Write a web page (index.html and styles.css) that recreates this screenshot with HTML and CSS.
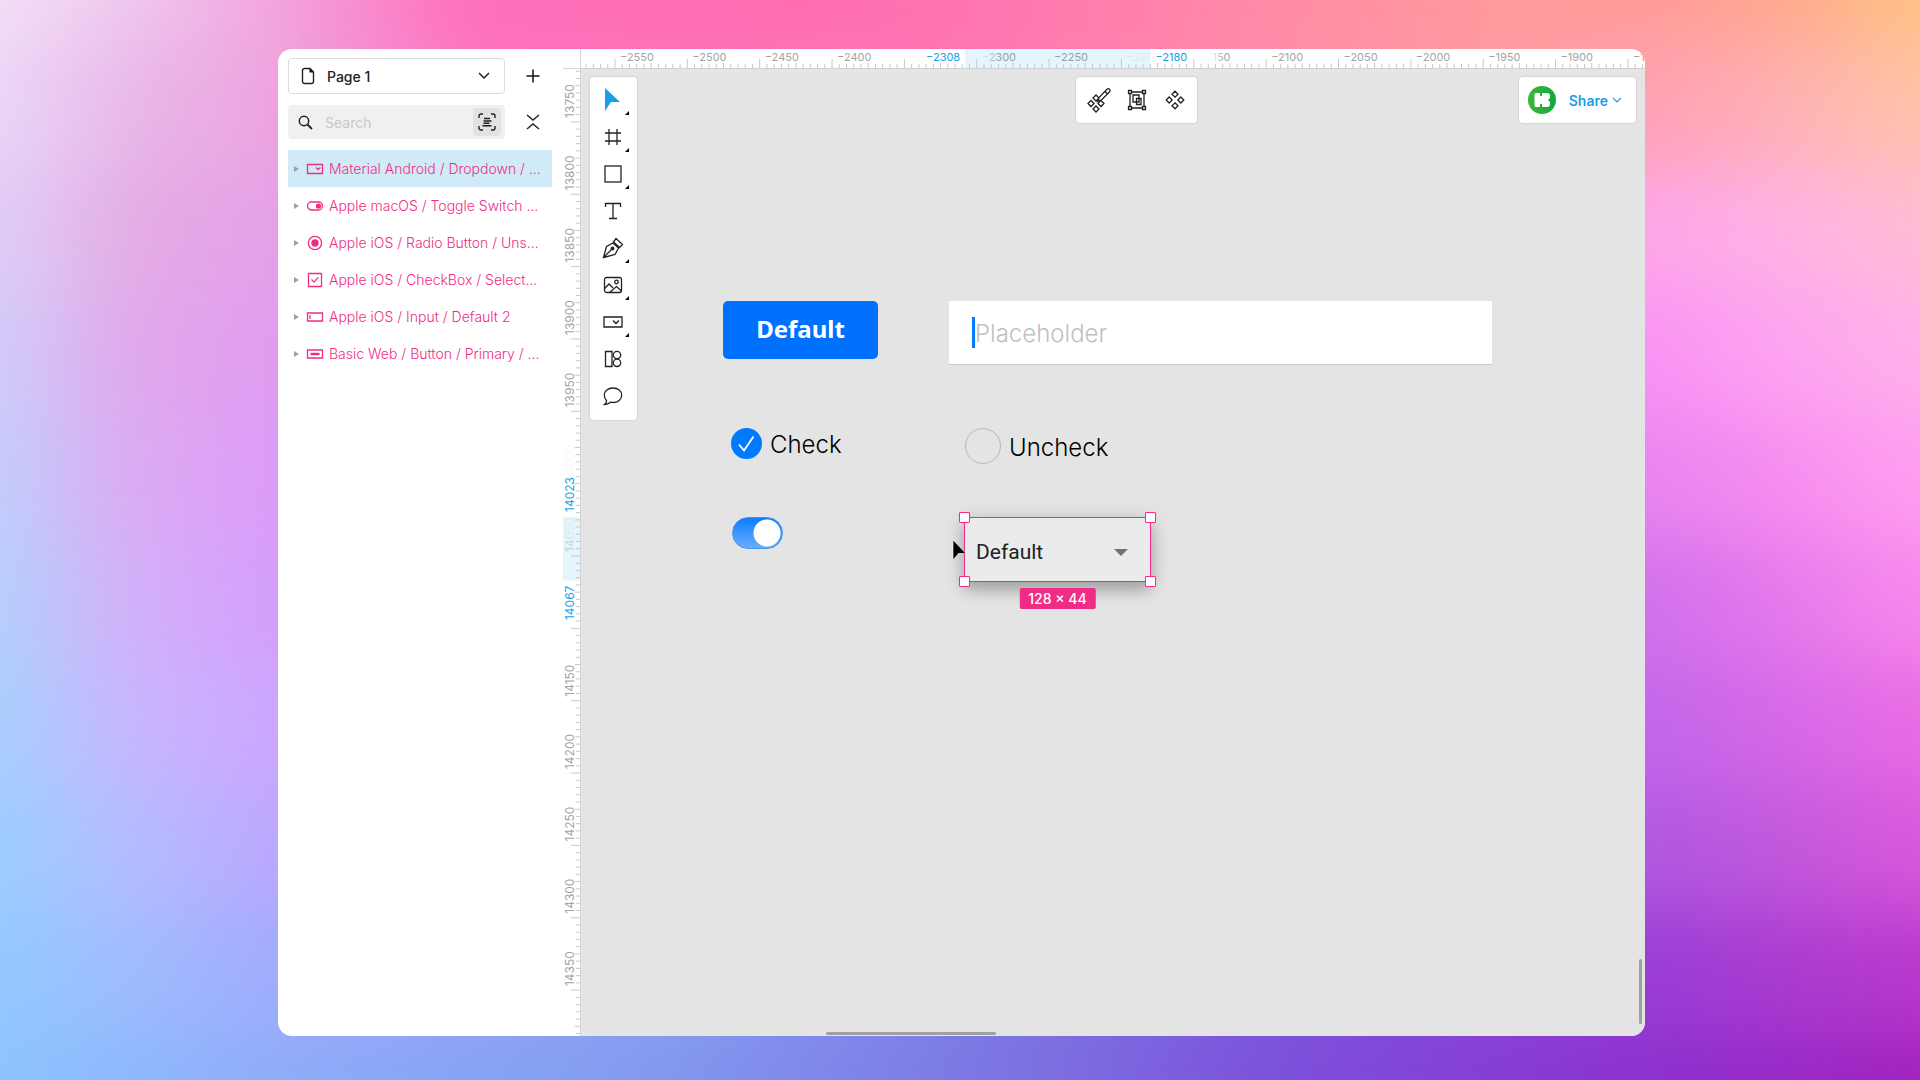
FILE: index.html
```html
<!DOCTYPE html>
<html lang="en">
<head>
<meta charset="utf-8">
<title>Page 1</title>
<link rel="stylesheet" href="styles.css">
</head>
<body>
<div class="stage">
<div class="backdrop" aria-hidden="true">
  <div class="band band-1"></div><div class="band band-2"></div><div class="band band-3"></div><div class="band band-4"></div><div class="band band-5"></div>
  <div class="band band-6"></div><div class="band band-7"></div><div class="band band-8"></div><div class="band band-9"></div><div class="band band-10"></div>
</div>
<main class="app">
  <aside class="sidebar">
    <div class="side-row">
      <button class="page-picker" type="button">
        <svg width="14" height="18" viewBox="0 0 14 18" fill="none" stroke="#222" stroke-width="1.4"><path d="M1.5 3.5a2 2 0 0 1 2-2H9l3.5 3.5v9.5a2 2 0 0 1-2 2h-7a2 2 0 0 1-2-2z"/><path d="M8.5 1v4.500H13z" fill="#111" stroke="none"/></svg>
        <span class="page-name">Page 1</span>
        <svg width="12" height="8" viewBox="0 0 12 8" fill="none" stroke="#222" stroke-width="1.5"><path d="M1 1l5 5 5-5"/></svg>
      </button>
      <button class="side-button" type="button" aria-label="Add page"><svg width="14" height="14" viewBox="0 0 14 14" stroke="#111" stroke-width="1.5"><path d="M7 .5v13M.5 7h13"/></svg></button>
    </div>
    <div class="side-row">
      <div class="search">
        <svg width="15" height="15" viewBox="0 0 15 15" fill="none" stroke="#222" stroke-width="1.5"><circle cx="6" cy="6" r="4.700"/><path d="M9.500 9.500L14 14" stroke-width="1.800"/></svg>
        <input class="search-input" type="text" placeholder="Search" aria-label="Search layers">
        <button class="scan" type="button" aria-label="Search in text"><svg width="18" height="18" viewBox="0 0 18 18" fill="none" stroke="#222" stroke-width="1.400"><path d="M1 5V3a2 2 0 0 1 2-2h2M13 1h2a2 2 0 0 1 2 2v2M17 13v2a2 2 0 0 1-2 2h-2M5 17H3a2 2 0 0 1-2-2v-2M6 5.500h6M5.500 8h8M5.500 10.300h6M4.500 12.700h9"/></svg></button>
      </div>
      <button class="side-button" type="button" aria-label="Collapse all"><svg width="14" height="16" viewBox="0 0 14 16" fill="none" stroke="#222" stroke-width="1.400"><path d="M1 1l6 5 6-5M1 15l6-5 6 5"/></svg></button>
    </div>
    <ul class="layers">
      <li class="layer layer-selected"><span class="twist"></span><svg class="layer-icon" viewBox="0 0 18 16"><path d="M1.500 3.500h15v9h-15z"/><path d="M10 6.500l2.200 2.200 2.200-2.200"/></svg><span class="layer-name">Material Android / Dropdown / ...</span></li>
      <li class="layer"><span class="twist"></span><svg class="layer-icon" viewBox="0 0 18 16"><rect x="1.500" y="4" width="15" height="8" rx="4"/><circle cx="12.500" cy="8" r="2.600" fill="#f02d86" stroke="none"/></svg><span class="layer-name">Apple macOS / Toggle Switch ...</span></li>
      <li class="layer"><span class="twist"></span><svg class="layer-icon" viewBox="0 0 18 16"><circle cx="9" cy="8" r="6.600"/><circle cx="9" cy="8" r="3.700" fill="#f02d86" stroke="none"/></svg><span class="layer-name">Apple iOS / Radio Button / Uns...</span></li>
      <li class="layer"><span class="twist"></span><svg class="layer-icon" viewBox="0 0 18 16"><path d="M2.500 1.500h13v13h-13z"/><path d="M5.500 7.500l2.600 2.600 4-4.800"/></svg><span class="layer-name">Apple iOS / CheckBox / Select...</span></li>
      <li class="layer"><span class="twist"></span><svg class="layer-icon" viewBox="0 0 18 16"><path d="M1.500 4h15v8h-15zM4 6v4"/></svg><span class="layer-name">Apple iOS / Input / Default 2</span></li>
      <li class="layer"><span class="twist"></span><svg class="layer-icon" viewBox="0 0 18 16"><path d="M1.500 4h15v8h-15z"/><path d="M4.500 8h9" stroke-width="2.400"/></svg><span class="layer-name">Basic Web / Button / Primary / ...</span></li>
    </ul>
  </aside>

  <section class="workspace">
    <div class="corner"></div>
    <svg class="ruler-x" id="ruler-x">
      <defs><linearGradient id="fade-x" gradientUnits="userSpaceOnUse" x1="310" y1="0" x2="650" y2="0">
        <stop offset="0" stop-color="#fff" stop-opacity="0"/><stop offset=".05" stop-color="#fff" stop-opacity=".95"/><stop offset=".27" stop-color="#fff" stop-opacity=".95"/><stop offset=".32" stop-color="#fff" stop-opacity="0"/>
        <stop offset=".65" stop-color="#fff" stop-opacity="0"/><stop offset=".7" stop-color="#fff" stop-opacity=".88"/><stop offset=".94" stop-color="#fff" stop-opacity=".95"/><stop offset=".98" stop-color="#fff" stop-opacity="0"/></linearGradient></defs>
    </svg>
    <svg class="ruler-y" id="ruler-y">
      <defs><linearGradient id="fade-y" gradientUnits="userSpaceOnUse" x1="0" y1="350" x2="0" y2="590">
        <stop offset="0" stop-color="#fff" stop-opacity="0"/><stop offset=".1" stop-color="#fff" stop-opacity=".92"/><stop offset=".38" stop-color="#fff" stop-opacity=".95"/><stop offset=".48" stop-color="#fff" stop-opacity=".85"/><stop offset=".56" stop-color="#fff" stop-opacity=".4"/><stop offset=".65" stop-color="#fff"/><stop offset=".9" stop-color="#fff"/><stop offset="1" stop-color="#fff" stop-opacity="0"/></linearGradient></defs>
    </svg>

    <div class="canvas">
      <nav class="panel tools" aria-label="Tools">
        <button class="tool tool-more" type="button" aria-label="Select"><svg width="26" height="26" viewBox="0 0 26 26"><path d="M5 1v23l6-9h9z" fill="#189fe8"/></svg></button>
        <button class="tool tool-more" type="button" aria-label="Frame"><svg width="20" height="20" viewBox="0 0 20 20"><path d="M6 2v16M14 2v16M2 6h16M2 14h16"/></svg></button>
        <button class="tool tool-more" type="button" aria-label="Rectangle"><svg width="20" height="20" viewBox="0 0 20 20"><rect x="2" y="2" width="16" height="16"/></svg></button>
        <button class="tool" type="button" aria-label="Text"><svg width="20" height="20" viewBox="0 0 20 20"><path d="M2.500 6V2.500h15V6M10 2.500v15M6 17.500h8"/></svg></button>
        <button class="tool tool-more" type="button" aria-label="Pen"><svg width="22" height="22" viewBox="0 0 22 22"><path d="M1.500 20.500L4.500 9.500 11 6l5.500 5L13 17.500zM1.500 20.500l8-8M11.500 5l2.500-3.500 6.500 6-3 3z"/><circle cx="10.500" cy="11.500" r="1.300" fill="#222"/></svg></button>
        <button class="tool tool-more" type="button" aria-label="Image"><svg width="20" height="20" viewBox="0 0 20 20"><rect x="1.500" y="2.500" width="17" height="15" rx="2"/><circle cx="13.500" cy="7" r="1.800"/><path d="M1.500 13.500L6 9l4 4M6.500 17.500l7-6 5 4.500"/></svg></button>
        <button class="tool tool-more" type="button" aria-label="Component"><svg width="20" height="20" viewBox="0 0 20 20"><path d="M1 5h18v10H1zM10 8.500l3 3 3-3"/></svg></button>
        <button class="tool" type="button" aria-label="Icons"><svg width="20" height="20" viewBox="0 0 20 20"><path d="M2.500 2.500H9v15H2.500z"/><circle cx="14" cy="6" r="3.700"/><circle cx="14" cy="13.800" r="3.700"/></svg></button>
        <button class="tool" type="button" aria-label="Comment"><svg width="20" height="20" viewBox="0 0 20 20"><path d="M1.500 18.500c1.800-1.500 2.300-2.500 2-4C2 13 1.300 11.500 1.300 9.200 1.300 5 5 2 10 2s8.700 3 8.700 7.200-3.700 7.300-8.700 7.300c-1 0-1.700-.1-2.500-.3-1.500 1.500-3.500 2.300-6 2.300z"/></svg></button>
      </nav>

      <div class="panel actions">
        <button class="tool" type="button" aria-label="Edit component"><svg width="24" height="26" viewBox="0 0 24 26"><path d="M4 13.500l3 3-3 3-3-3zM9 8l3 3-3 3-3-3zM14 13.500l3 3-3 3-3-3zM9 19l3 3-3 3-3-3z"/><path d="M10.500 14.500l2-4.500L20 2.300a1.700 1.700 0 0 1 2.600 2.400L15 12.500zM18 4.500l2.500 2.500" fill="#fff"/></svg></button>
        <button class="tool" type="button" aria-label="Group"><svg width="20" height="22" viewBox="0 0 20 22"><path d="M3 3h14v16H3zM6 6h6v7H6zM9.500 9.500H14v6H9.500z"/><path d="M1.500 1.500h3v3h-3zM15.500 1.500h3v3h-3zM1.500 17.500h3v3h-3zM15.500 17.500h3v3h-3z" fill="#fff"/></svg></button>
        <button class="tool" type="button" aria-label="Create component"><svg width="20" height="20" viewBox="0 0 20 20"><path d="M10 1.200l3 3-3 3-3-3zM4.200 7l3 3-3 3-3-3zM15.800 7l3 3-3 3-3-3zM10 12.800l3 3-3 3-3-3z"/></svg></button>
      </div>

      <div class="panel share-panel">
        <svg width="28" height="28" viewBox="0 0 28 28"><defs><linearGradient id="leaf"><stop offset="0" stop-color="#3fb63a"/><stop offset="1" stop-color="#12a83f"/></linearGradient></defs><circle cx="14" cy="14" r="14" fill="url(#leaf)"/><path d="M8 7h4v3h2V8q0-1 1-1h4q3 0 3 3v2l-2 2 2 2v2q0 3-3 3h-4q-1 0-1-1v-2h-2v3H8q-1.500 0-1.500-1.500v-11Q6.500 7 8 7z" fill="#fff"/></svg>
        <button class="share" type="button">Share<svg width="10" height="7" viewBox="0 0 10 7" fill="none" stroke="#189fe8" stroke-width="1.100"><path d="M1 1l4 4 4-4"/></svg></button>
      </div>

      <button class="item primary-button" type="button">Default</button>
      <div class="item text-field"><input class="text-input" type="text" placeholder="Placeholder" aria-label="Placeholder"></div>

      <label class="item choice choice-check"><input class="round-box round-check" type="checkbox" checked><span class="choice-text">Check</span><svg class="tick" width="31" height="31" viewBox="0 0 31 31" fill="none" stroke="#fff" stroke-width="1.800"><path d="M8 16.500l5 6L22.500 8.500"/></svg></label>
      <label class="item choice choice-radio"><input class="round-box round-radio" type="radio"><span class="choice-text">Uncheck</span></label>
      <input class="item switch" type="checkbox" role="switch" aria-label="Toggle" checked>

      <div class="item dropdown">
        <select class="dropdown-select" aria-label="Dropdown"><option>Default</option></select>
        <svg class="dropdown-arrow" width="14" height="7" viewBox="0 0 14 7"><path d="M0 0h14L7 7z" fill="#737373"/></svg>
        <span class="handle handle-tl"></span><span class="handle handle-tr"></span><span class="handle handle-bl"></span><span class="handle handle-br"></span>
        <span class="size-badge">128 × 44</span>
      </div>
      <svg class="item pointer" width="15" height="24" viewBox="0 0 15 24"><path d="M1 1v20l5.500-6.500H14z" fill="#000" stroke="#fff" stroke-width=".6"/></svg>
      <span class="scroll-x"></span><span class="scroll-y"></span>
    </div>
  </section>
</main>
</div>
<script src="rulers.js"></script>
</body>
</html>
```
FILE: rulers.js
```js
const NS = 'http://www.w3.org/2000/svg';
const SCALE = 1.447;

function add(parent, tag, attrs, text) {
  const node = document.createElementNS(NS, tag);
  for (const key in attrs) node.setAttribute(key, attrs[key]);
  if (text) node.textContent = text;
  parent.appendChild(node);
}
function label(value) { return String(value).replace('-', '−'); }

// labels: first and last labelled value; selection: start and end of the selected layer
function drawRuler(svg, vertical, labels, anchor, anchorPos, selection) {
  const pos = v => anchorPos + (v - anchor) * SCALE;
  const depth = vertical ? 18 : 20;
  const size = vertical ? ' ruler-label-y' : '';
  const text = (p, value, cls, end) => add(svg, 'text', vertical
    ? { transform: `translate(11 ${p}) rotate(-90)`, class: cls + size, 'text-anchor': end ? 'end' : 'start' }
    : { x: p, y: 12, class: cls, 'text-anchor': end ? 'end' : 'start' }, label(value));

  for (let v = labels[0]; v <= labels[1]; v += 50) text(pos(v) + (vertical ? -4 : 5), v, 'ruler-label');
  const a = pos(selection[0]), b = pos(selection[1]);
  add(svg, 'rect', vertical
    ? { x: 0, y: 350, width: 14, height: 240, fill: 'url(#fade-y)' }
    : { x: 310, y: 0, width: 340, height: 15, fill: 'url(#fade-x)' });
  add(svg, 'rect', vertical
    ? { x: 0, y: a, width: 18, height: b - a, class: 'ruler-range' }
    : { x: a, y: 0, width: b - a, height: 20, class: 'ruler-range' });
  for (let v = labels[0] - 50; v <= labels[1] + 500; v += 5) {
    const length = v % 50 === 0 ? 10 : v % 25 === 0 ? 6 : 5;
    const p = pos(v);
    add(svg, 'line', vertical
      ? { x1: depth - length, x2: depth, y1: p, y2: p, class: 'ruler-tick' }
      : { x1: p, x2: p, y1: depth - length, y2: depth, class: 'ruler-tick' });
  }
  text(a - 5, selection[0], 'ruler-label ruler-active', !vertical);
  text(b + 5, selection[1], 'ruler-label ruler-active', vertical);
}
drawRuler(document.getElementById('ruler-x'), false, [-2550, -1850], -2550, 34, [-2308, -2180]);
drawRuler(document.getElementById('ruler-y'), true, [13750, 14350], 14050, 487, [14023, 14067]);
```
FILE: styles.css
```css
* { box-sizing: border-box; }
body { margin: 0; font-family: Inter, "Liberation Sans", sans-serif; font-size: 14px; color: #222; }
button { font: inherit; border: 0; background: none; padding: 0; color: inherit; }
input, select { font: inherit; margin: 0; }

.stage { position: relative; min-height: 100vh; display: flex; padding: 49px 275px 44px 278px; overflow: hidden; isolation: isolate; }
.backdrop { position: absolute; inset: -80px; display: flex; flex-direction: column; filter: blur(36px); z-index: -1; }
.band { flex: 1; }
.band-1 { background: linear-gradient(90deg, #f4dff8 4%, #efc8ee 10%, #f2a6de 17%, #ff6eba 26%, #ff6bb0 42%, #ff76b0 52%, #ff9c9a 77%, #ff9a96 83%, #ffa68c 89%, #ffc282 96%); }
.band-2 { background: linear-gradient(90deg, #ebd6f8 4%, #e8b8e8 10%, #eda4e0 17%, #ff74c0 27%, #ff78b4 50%, #ff9ca4 76%, #ffa0b4 83%, #ffb0b6 89%, #ffc2a8 96%); }
.band-3 { background: linear-gradient(90deg, #dfcef8 4%, #e4ace4 10%, #e4a0e8 17%, #ffa6ea 83%, #ffb0e6 89%, #ffbcd4 96%); }
.band-4 { background: linear-gradient(90deg, #d0ccfa 4%, #e0a8ea 10%, #e09cf0 17%, #f892f4 83%, #fea2f2 89%, #ffb0ea 96%); }
.band-5 { background: linear-gradient(90deg, #c2cefc 4%, #dcaaf2 10%, #dc9cf8 17%, #e884f0 83%, #f68cf0 89%, #ff9ef0 96%); }
.band-6 { background: linear-gradient(90deg, #b4d0fe 4%, #d4b0f8 10%, #d49efc 17%, #d070ec 83%, #e478ec 89%, #f888ec 96%); }
.band-7 { background: linear-gradient(90deg, #a8d0ff 4%, #c8b6fd 10%, #cca6ff 17%, #c266ea 83%, #d468e8 89%, #e86ce4 96%); }
.band-8 { background: linear-gradient(90deg, #9cceff 4%, #b4bcff 10%, #bca8ff 17%, #b058e0 83%, #c058dc 89%, #d858dc 96%); }
.band-9 { background: linear-gradient(90deg, #92c8ff 4%, #a0bcff 10%, #a0acfc 17%, #88a0f4 36%, #7c78e4 52%, #7c50dc 68%, #9a3cd6 83%, #a83cd0 89%, #b838cc 96%); }
.band-10 { background: linear-gradient(90deg, #8cc4ff 4%, #8cb8fc 10%, #8cacf8 17%, #829cf0 33%, #7c74e2 52%, #7c50da 65%, #8a30cc 83%, #9628c8 89%, #a020bc 96%); }

.app { flex: 1; min-width: 0; display: flex; background: #fff; border-radius: 14px; overflow: hidden; }
.sidebar { width: 285px; flex: none; padding: 9px 12px 0 10px; display: flex; flex-direction: column; gap: 11px; }
.side-row { display: flex; align-items: center; gap: 14px; }
.page-picker { flex: none; width: 217px; height: 36px; display: flex; align-items: center; gap: 12px; padding: 0 14px 0 12px; border: 1px solid #dcdcdc; border-radius: 4px; font-weight: 500; text-align: left; }
.page-name { flex: 1; }
.side-button { width: 28px; height: 28px; display: grid; place-items: center; }
.search { width: 217px; height: 34px; display: flex; align-items: center; gap: 12px; padding: 0 4px 0 10px; background: #f0f0f0; border-radius: 4px; }
.search-input { flex: 1; min-width: 0; border: 0; background: none; padding: 0; outline: 0; }
.search-input::placeholder { color: #c8c8c8; }
.scan { width: 28px; height: 28px; display: grid; place-items: center; background: #e2e2e2; border-radius: 4px; }
.layers { list-style: none; margin: 0; padding: 0; width: 264px; }
.layer { height: 37px; display: flex; align-items: center; gap: 5px; padding-left: 6px; color: #f02d86; font-weight: 300; white-space: nowrap; }
.layer-selected { background: #d1eaf8; }
.twist { border: 3px solid transparent; border-left: 5px solid #a0a0a0; border-right: 0; margin-right: 2px; }
.layer-icon { width: 18px; height: 16px; flex: none; fill: none; stroke: #f02d86; stroke-width: 1.3; }

.workspace { flex: 1; min-width: 0; display: grid; grid-template: 20px 1fr / 18px 1fr; }
.corner { border-right: 1px solid #d6d6d6; border-bottom: 1px solid #d6d6d6; }
.ruler-x { width: 100%; height: 20px; border-bottom: 1px solid #d2d2d2; }
.ruler-y { width: 18px; height: 100%; border-right: 1px solid #d2d2d2; }
.ruler-label { font-size: 11px; fill: #a3a3a3; }
.ruler-label-y { font-size: 12px; }
.ruler-active { fill: #189fe8; }
.ruler-range { fill: #189fe8; fill-opacity: .11; }
.ruler-tick { stroke: #c8c8c8; stroke-width: 1; }

.canvas { position: relative; background: #e4e4e4; overflow: hidden; }
.panel { position: absolute; top: 8px; background: #fff; border-radius: 4px; box-shadow: 0 0 2px rgba(0, 0, 0, .2); display: flex; }
.tools { left: 9px; width: 47px; height: 343px; padding: 4px; flex-direction: column; }
.actions { left: calc(50% - 37px); height: 46px; padding: 0 4px; gap: 1px; align-items: center; }
.tool { width: 37px; height: 37px; display: grid; place-items: center; position: relative; }
.tool svg { fill: none; stroke: #222; stroke-width: 1.3; }
.tool svg [fill="#189fe8"] { stroke: none; }
.tool-more::after { content: ""; position: absolute; right: 2px; bottom: 3px; border: 2px solid #000; border-top-color: transparent; border-left-color: transparent; }
.share-panel { right: 9px; height: 46px; padding: 0 14px 0 9px; align-items: center; gap: 13px; }
.share { display: flex; align-items: center; gap: 4px; color: #189fe8; font-weight: 600; }

.item { position: absolute; }
.primary-button { left: 142px; top: 232px; width: 155px; height: 58px; padding-bottom: 3px; border-radius: 5px; background: #0070ff; color: #fff; font: 700 24px "Noto Sans", sans-serif; }
.text-field { left: 368px; top: 232px; width: 543px; height: 64px; padding-left: 23px; background: #fff; border-bottom: 1px solid #c8c8c8; display: flex; align-items: center; }
.text-input { flex: 1; height: 31px; border: 0; border-left: 3px solid #007aff; padding: 2px 0 0; outline: 0; font-size: 24px; font-weight: 300; }
.text-input::placeholder { color: #c0c0c0; }
.choice { display: flex; align-items: center; gap: 8px; font-size: 24px; font-weight: 300; line-height: 32px; color: #000; }
.choice-text { padding-top: 4px; }
.choice-check { left: 150px; top: 356px; }
.choice-radio { left: 384px; top: 359px; }
.round-box { appearance: none; border-radius: 50%; }
.round-check { width: 31px; height: 31px; background: #007aff; }
.round-radio { width: 36px; height: 36px; border: 1px solid #b8b8b8; }
.tick { position: absolute; left: 0; }
.switch { appearance: none; left: 151px; top: 448px; width: 51px; height: 32px; border-radius: 16px; background: radial-gradient(circle at 35px 16px, #fff 13px, transparent 14px), linear-gradient(#0a7cff, #6cb0fb); border: 1px solid #4a94e8; background-origin: border-box; }
.dropdown { left: 383px; top: 448px; width: 187px; height: 65px; background: #ebebeb; border: 1px solid #f02d86; box-shadow: 0 8px 14px rgba(0, 0, 0, .25), 0 2px 24px rgba(0, 0, 0, .1); }
.dropdown-select { appearance: none; width: 100%; height: 100%; border: 0; background: none; padding: 4px 11px 0; font: 21px Roboto, sans-serif; color: #222; outline: 0; }
.dropdown-arrow { position: absolute; right: 22px; top: 31px; }
.handle { position: absolute; width: 11px; height: 11px; background: #fff; border: 1px solid #f02d86; border-radius: 1px; }
.handle-tl { left: -6px; top: -6px; }
.handle-tr { right: -6px; top: -6px; }
.handle-bl { left: -6px; bottom: -6px; }
.handle-br { right: -6px; bottom: -6px; }
.size-badge { position: absolute; left: 50%; top: 70px; transform: translateX(-50%); padding: 0 9px; line-height: 21px; background: #f02d86; color: #fff; border-radius: 2px; font-weight: 500; white-space: nowrap; }
.pointer { left: 371px; top: 470px; }
.scroll-x, .scroll-y { position: absolute; background: #a0a0a0; border-radius: 2px; }
.scroll-x { left: 23%; width: 16%; bottom: 1px; height: 3px; }
.scroll-y { right: 3px; bottom: 12px; width: 3px; height: 65px; }
```
